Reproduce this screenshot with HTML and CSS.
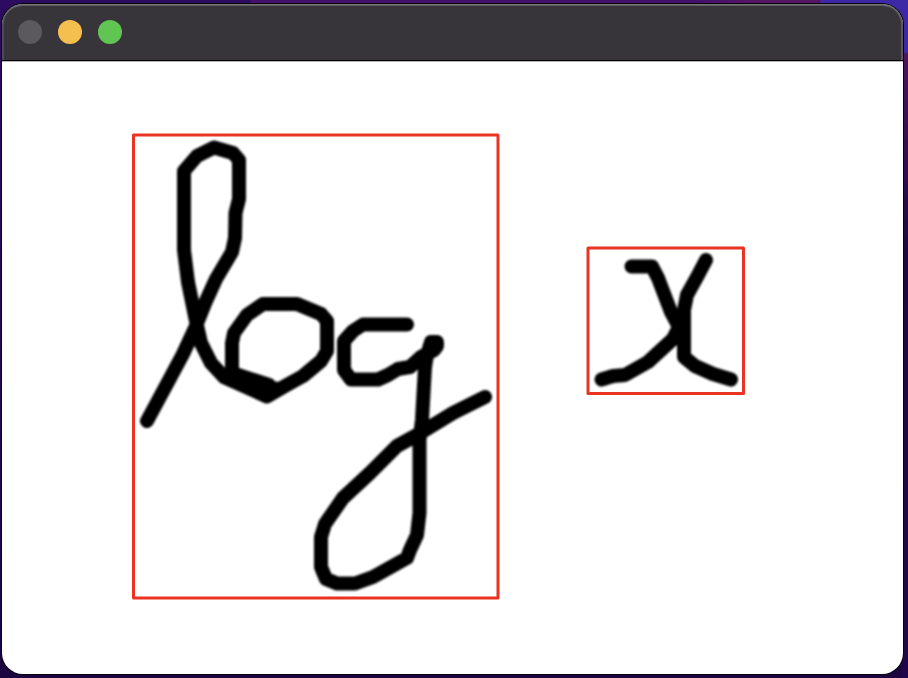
FILE: index.html
```html
<!DOCTYPE html>
<html lang="en">
<head>
<meta charset="utf-8">
<title>Canvas</title>
<link rel="stylesheet" href="styles.css">
</head>
<body>
<main class="window">
  <header class="titlebar">
    <span class="light light-close"></span>
    <span class="light light-minimize"></span>
    <span class="light light-zoom"></span>
  </header>
  <svg class="canvas" viewBox="2 62 901 612" aria-label="Handwritten log x">
    <g class="ink">
      <path d="M147 421L168 382L183 354L196 326L206 301L216 279L232 252L235 238L235.500 213L239 199V160L233 153L214 147.500L197 156L184 171V250L188 282L196 321L201 343L211 363L224 377L267 396.500L285 386L303 376L321 361L327 351V321L321 314L297 304H263L247 315L234 333L232 343V373L269 385"/>
      <path d="M224 377L232 373L269 385L280 386L267 397L249 388Z" class="blot"/>
      <path d="M407 324.500H363L353 331L344 341V370L351 379.500H378L388 375L398 369L410 367L421 357L434 350L437 346V342H431L427 355L425 367L422 420L419.500 440V513L417 535L410 550L407 558L373 577L355 583.500H337L326 579L321 567V537L325 524L343 498L370 473L397 446L417 435L453 413L485 397"/>
      <path d="M631.500 266.500H652L658 278L671 312L679 327L673 339L648 362L625 375L613 376L601.500 379.500"/>
      <path d="M706 260L697 277L687 295L684 310V357L695 366L713 374L731 379.500"/>
    </g>
    <g class="bounds">
      <rect x="133.500" y="135" width="364.500" height="463"/>
      <rect x="588" y="248" width="155.500" height="145.500"/>
    </g>
  </svg>
</main>
</body>
</html>
```

FILE: styles.css
```css
* { box-sizing: border-box; }

body {
  margin: 0;
  height: 678px;
  padding: 4px 4px 4px 2px;
  overflow: hidden;
  background:
    linear-gradient(90deg, #2d0b60 0 250px, #43116c 251px 700px, #571563 760px 820px, #3d28a5 821px) 0 0 / 100% 4px no-repeat,
    linear-gradient(#3d28a5, #3d28a5) 100% 0 / 30px 24px no-repeat,
    linear-gradient(#3d28a5 0 52px, #4a1460 54px, #210642 250px, #20074a) 100% 0 / 6px 100% no-repeat,
    linear-gradient(#2d0b60, #1b0640);
}

.window {
  display: flex;
  flex-direction: column;
  width: 901px;
  height: 670px;
  overflow: hidden;
  border-radius: 21px;
  background: #fff;
  box-shadow: 0 0 0 1px #08040c;
}

.titlebar {
  display: flex;
  flex: none;
  align-items: center;
  gap: 16px;
  height: 58px;
  padding: 0 16px 2px;
  border-radius: 21px 21px 0 0;
  background: #37343a;
  box-shadow: inset 0 -1px 0 #b5b5b5, inset 0 -2px 0 #000, inset 0 1px 0 #77767a, inset 0 2px 0 #5d5b60, inset 2px 0 0 #4e4b51, inset -2px 0 0 #5a575d;
}

.light {
  width: 24px;
  height: 24px;
  border-radius: 50%;
}

.light-close { background: #5b585e; }
.light-minimize { background: #f5bf4f; }
.light-zoom { background: #61c554; }

.canvas {
  display: block;
  width: 901px;
  height: 612px;
}

.ink {
  fill: none;
  stroke: #000;
  stroke-width: 14;
  stroke-linecap: round;
  stroke-linejoin: round;
  filter: blur(0.9px);
}

.blot {
  fill: #000;
  stroke-width: 8;
}

.bounds {
  fill: none;
  stroke: #ea3323;
  stroke-width: 3;
  stroke-linejoin: round;
}
```
